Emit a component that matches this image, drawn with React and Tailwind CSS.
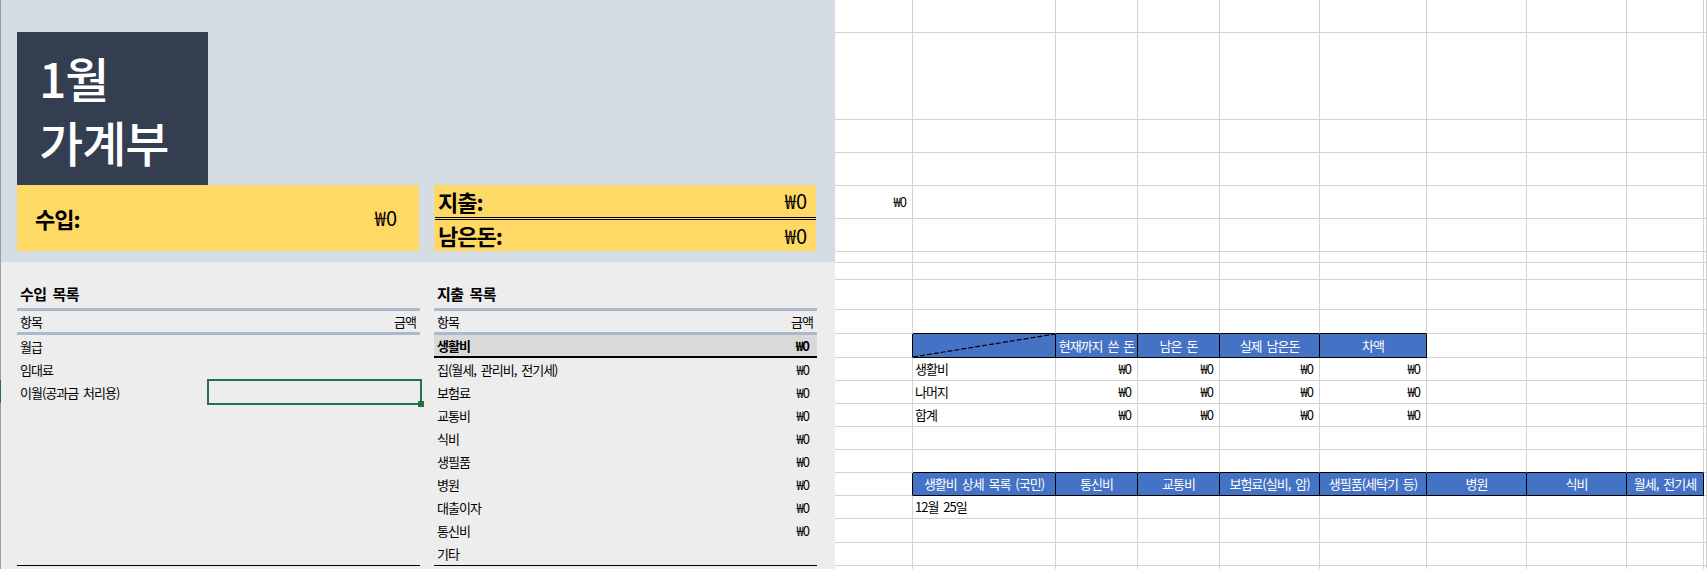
import React from "react";

const FONT = '"Noto Sans CJK KR", "Noto Sans", sans-serif';

const ROWS = 21;
const COLS = 10;

const header1 = { 2: "현재까지 쓴 돈", 3: "남은 돈", 4: "실제 남은돈", 5: "차액" };
const header2 = {
  1: "생활비 상세 목록 (국민)",
  2: "통신비",
  3: "교통비",
  4: "보험료(실비, 암)",
  5: "생필품(세탁기 등)",
  6: "병원",
  7: "식비",
  8: "월세, 전기세",
};
const labels = { 11: "생활비", 12: "나머지", 13: "합계", 17: "12월 25일" };

function inH1(r, c) {
  return r === 10 && c >= 1 && c <= 5;
}
function inH2(r, c) {
  return r === 16 && c >= 1 && c <= 8;
}

function Cell({ r, c }) {
  const blue = inH1(r, c) || inH2(r, c);
  const blackB = blue || (r === 9 && c >= 1 && c <= 5) || (r === 15 && c >= 1 && c <= 8);
  const blackR = blue || ((r === 10 || r === 16) && c === 0);
  const cls = [
    "relative flex items-center overflow-hidden whitespace-nowrap border-r border-b text-[13px] tracking-[-1px] [word-spacing:3px]",
    blackR ? "border-r-black" : "border-r-[#d4d4d4]",
    blackB ? "border-b-black" : "border-b-[#d4d4d4]",
    blue ? "bg-[#4472c4] text-white justify-center" : "text-black",
  ].join(" ");

  let content = null;
  let extra = "";
  if (r === 10 && c === 1) {
    content = (
      <svg className="absolute inset-0 h-full w-full" viewBox="0 0 142 23" preserveAspectRatio="none">
        <line x1="0" y1="23" x2="142" y2="0" stroke="#000" strokeWidth="1.2" strokeDasharray="5 2" />
      </svg>
    );
  } else if (r === 10 && header1[c]) {
    content = header1[c];
  } else if (r === 16 && header2[c]) {
    content = header2[c];
  } else if (r === 4 && c === 0) {
    content = "₩0";
    extra = " justify-end pr-[6px]";
  } else if (labels[r] && c === 1) {
    content = labels[r];
    extra = " pl-[2px]";
  } else if (r >= 11 && r <= 13 && c >= 2 && c <= 5) {
    content = "₩0";
    extra = " justify-end pr-[6px]";
  }
  return <div className={cls + extra}>{content}</div>;
}

function Grid() {
  const cells = [];
  for (let r = 0; r < ROWS; r++) {
    for (let c = 0; c < COLS; c++) {
      cells.push(<Cell key={r + "-" + c} r={r} c={c} />);
    }
  }
  return (
    <div className="grid h-[569px] w-[872px] grid-cols-[78px_143px_82px_82px_100px_107px_100px_100px_77px_1fr] grid-rows-[33px_87px_33px_33px_33px_33px_11px_17px_30px_24px_24px_23px_23px_23px_23px_23px_23px_23px_24px_23px_23px] overflow-hidden bg-white">
      {cells}
    </div>
  );
}

const incomeRows = ["월급", "임대료"];
const expenseRows = ["집(월세, 관리비, 전기세)", "보험료", "교통비", "식비", "생필품", "병원", "대출이자", "통신비"];

function ListHead({ title }) {
  return (
    <>
      <div className="flex h-[46px] items-end pb-[4px] pl-[3px] text-[15px] font-bold leading-[20px] tracking-[-0.5px] [word-spacing:3px]">
        {title}
      </div>
      <div className="h-[3px] bg-[#acb9ca]" />
      <div className="flex h-[21px] items-center justify-between pl-[3px] pr-[4px] text-[13px] tracking-[-1px]">
        <span>항목</span>
        <span>금액</span>
      </div>
      <div className="h-[3px] bg-[#acb9ca]" />
    </>
  );
}

const rowText = "text-[13px] tracking-[-1px] [word-spacing:3px]";

export default function App() {
  return (
    <div className="flex h-[569px] w-[1707px] overflow-hidden bg-white text-black" style={{ fontFamily: FONT }}>
      <div className="flex w-px flex-col">
        <div className="h-[380px] bg-[#9e9e9e]" />
        <div className="h-[23px] bg-[#217346]" />
        <div className="flex-1 bg-[#9e9e9e]" />
      </div>

      <div className="flex w-[834px] flex-col">
        <div className="h-[262px] bg-[#d6dce4] pl-[16px] pt-[32px]">
          <div className="h-[153px] w-[191px] bg-[#333f50] pl-[22px] pt-[13px] text-[48px] font-medium leading-[64px] tracking-[-1px] text-white">
            <div>1월</div>
            <div>가계부</div>
          </div>
          <div className="flex h-[66px] gap-[15px]">
            <div className="flex w-[402px] items-center justify-between bg-[#ffd966] pl-[18px] pr-[22px]">
              <span className="text-[22px] font-bold tracking-[-1px]">수입:</span>
              <span className="text-[20px]">₩0</span>
            </div>
            <div className="flex w-[382px] flex-col bg-[#ffd966]">
              <div className="flex h-[32px] items-center justify-between pl-[4px] pr-[9px]">
                <span className="text-[22px] font-bold tracking-[-1px]">지출:</span>
                <span className="text-[20px]">₩0</span>
              </div>
              <div className="ml-px h-px bg-black" />
              <div className="h-px" />
              <div className="ml-px h-px bg-black" />
              <div className="flex h-[31px] items-center justify-between pl-[4px] pr-[9px]">
                <span className="text-[22px] font-bold tracking-[-1px]">남은돈:</span>
                <span className="text-[20px]">₩0</span>
              </div>
            </div>
          </div>
        </div>

        <div className="flex flex-1 gap-[14px] bg-[#ededed] pl-[16px]">
          <div className="flex w-[403px] flex-col">
            <ListHead title="수입 목록" />
            {incomeRows.map((t) => (
              <div key={t} className={"flex h-[23px] items-center pl-[3px] " + rowText}>
                {t}
              </div>
            ))}
            <div className={"relative flex h-[23px] items-center pl-[3px] " + rowText}>
              이월(공과금 처리용)
              <div className="absolute left-[190px] top-[-2px] h-[26px] w-[215px] border-2 border-[#217346]">
                <div className="absolute bottom-[-4px] right-[-4px] h-[6px] w-[6px] bg-[#217346]" />
              </div>
            </div>
            <div className="flex-1" />
            <div className="h-px bg-black" />
            <div className="h-[3px]" />
          </div>

          <div className="flex w-[383px] flex-col">
            <ListHead title="지출 목록" />
            <div className={"flex h-[21px] items-center justify-between bg-[#d9d9d9] pl-[3px] pr-[8px] font-bold " + rowText}>
              <span>생활비</span>
              <span>₩0</span>
            </div>
            <div className="h-[2px] bg-black" />
            {expenseRows.map((t) => (
              <div key={t} className={"flex h-[23px] items-center justify-between pl-[3px] pr-[8px] " + rowText}>
                <span>{t}</span>
                <span>₩0</span>
              </div>
            ))}
            <div className={"flex h-[23px] items-center pl-[3px] " + rowText}>기타</div>
            <div className="h-px bg-black" />
            <div className="h-[3px]" />
          </div>
        </div>
      </div>

      <Grid />
    </div>
  );
}
